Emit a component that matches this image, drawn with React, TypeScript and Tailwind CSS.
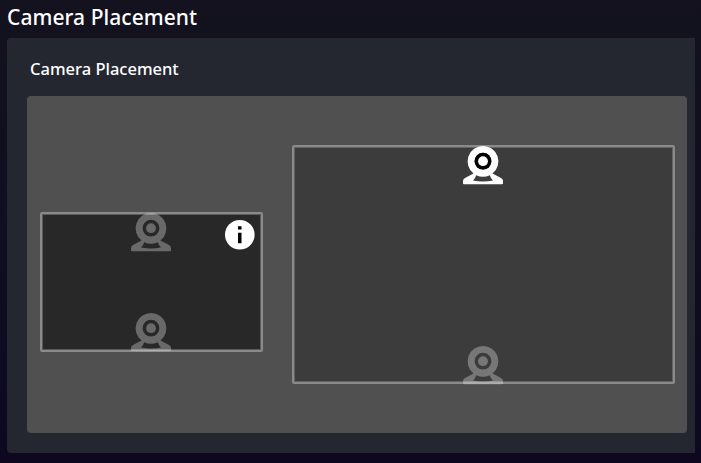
function Webcam({ active = false, className = "" }: { active?: boolean; className?: string }) {
  return (
    <svg viewBox="0 0 40 39" className={`mr-0.5 block h-[39px] w-[40px] shrink-0 ${active ? "" : "opacity-30"} ${className}`}>
      <path
        fill="#fff"
        fillRule="evenodd"
        d="M20 0a15.400 15.400 0 0 1 9.500 27.500L38 32Q40 33.200 40 35v2.300q0 1-1 1H1q-1 0-1-1V35q0-1.800 2-3L10.500 27.500A15.400 15.400 0 0 1 20 0ZM13.200 29.300Q12.500 32.300 10 34.400Q20 36.400 30 34.400Q27.500 32.300 26.800 29.300Q20 32.300 13.200 29.300ZM20 6.800a8.400 8.400 0 1 0 0 16.800a8.400 8.400 0 1 0 0-16.800Z"
      />
      {active && <circle cx="20" cy="15.200" r="8.400" fill="#000" />}
      <circle cx="20" cy="15.200" r="4.900" fill="#fff" />
    </svg>
  );
}

function Info() {
  return (
    <svg viewBox="0 0 30 30" className="absolute top-[6px] right-[6px] h-[30px] w-[30px]">
      <circle cx="14.800" cy="14.800" r="14.800" fill="#fff" />
      <path d="M13 6.300h3.500v3.200H13zM13 12.700h3.500v10.600H13z" fill="#000" />
    </svg>
  );
}

export default function App() {
  return (
    <main className="flex h-[463px] w-[701px] flex-col overflow-hidden bg-linear-to-b from-[#13121e] to-[#0d0820] pr-1.5 pl-[7px] font-['Noto_Sans','Open_Sans',sans-serif] text-white">
      <h1 className="h-[38px] shrink-0 text-[21px] leading-[35px] font-medium tracking-[0.06px] whitespace-nowrap">Camera Placement</h1>
      <section className="flex h-[415px] flex-col rounded-l bg-[#24272f] pr-2 pl-5">
        <h2 className="h-[58px] shrink-0 pl-[3px] text-[16.5px] leading-[62px] font-medium whitespace-nowrap">Camera Placement</h2>
        <div className="flex h-[337px] items-start rounded bg-[#505050] pl-[13px]">
          <div className="relative mt-[116px] flex h-[140px] w-[223px] flex-col items-center justify-between rounded-xs border-2 border-[#8a8a8a] bg-[#282828] shadow-[inset_0_0_0_1px_#5c5c5c]">
            <Webcam className="-mt-px" />
            <Webcam className="-mb-0.5" />
            <Info />
          </div>
          <div className="mt-[49px] ml-[29px] flex h-[239px] w-[383px] flex-col items-center justify-between rounded-xs border-2 border-[#8a8a8a] bg-[#3c3c3c] shadow-[inset_0_0_0_1px_#646464]">
            <Webcam active className="-mt-px" />
            <Webcam className="-mb-[3px]" />
          </div>
        </div>
      </section>
    </main>
  );
}
